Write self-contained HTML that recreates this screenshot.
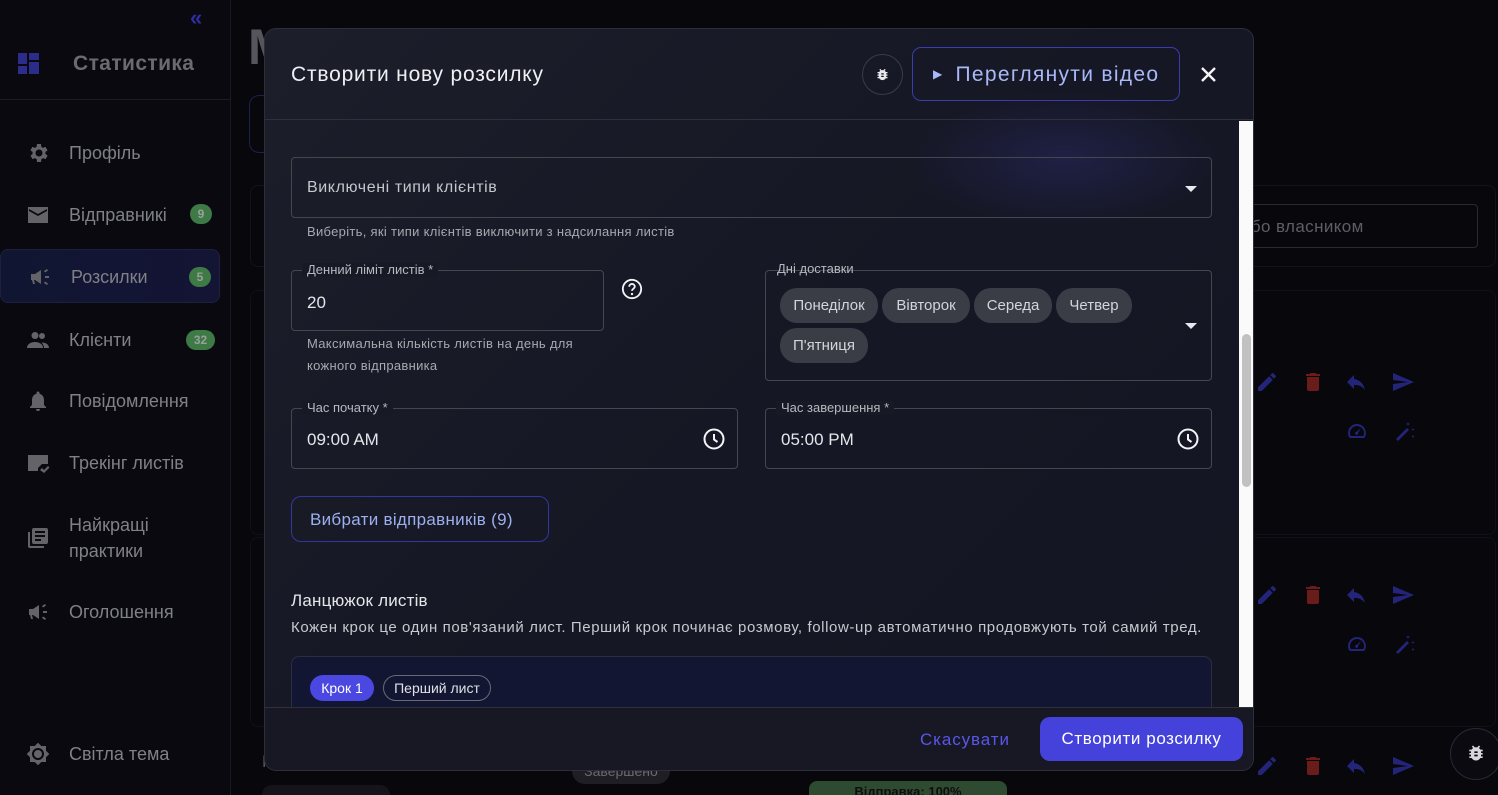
<!DOCTYPE html>
<html><head><meta charset="utf-8"><style>
*{box-sizing:border-box;margin:0;padding:0}
html,body{width:1498px;height:795px;overflow:hidden}
body{background:#07070c;font-family:"Liberation Sans",sans-serif;position:relative;color:#e8e8ee}
.sb{position:absolute;left:0;top:0;width:231px;height:795px;background:#09090f;border-right:1px solid #1a1a24}
.nav{position:absolute;left:26px;display:flex;align-items:center;color:#808088;font-size:18px}
.nav svg{width:24px;height:24px;fill:#646468;margin-right:19px}
.badge{position:absolute;height:20px;border-radius:10px;background:#3d7a45;color:#9aa19a;font-size:12px;font-weight:bold;display:flex;align-items:center;justify-content:center}
.modal{position:absolute;left:264px;top:28px;width:990px;height:743px;border-radius:12px;background:linear-gradient(135deg,#1c1e2a,#151724 50%,#141622);border:1px solid #2c2e3a;overflow:hidden}
.hdr{position:absolute;left:0;top:0;width:100%;height:91px;border-bottom:1px solid #2e303c}
.ttl{position:absolute;left:26px;top:34px;font-size:21px;color:#f0f0f4;letter-spacing:.8px}
.field{position:absolute;border:1px solid #45474f;border-radius:4px}
.lbl{position:absolute;top:-8px;left:10px;background:#171925;padding:0 5px;font-size:13px;color:#b8b8c0;line-height:14px}
.help{position:absolute;font-size:13px;color:#a8a8b0;letter-spacing:.3px;line-height:22px}
.val{position:absolute;left:15px;font-size:17px;color:#e6e6ea}
.chip{position:absolute;height:35px;border-radius:17px;background:#3a3c46;color:#d4d4da;font-size:15px;display:flex;align-items:center;justify-content:center}
.arrow{position:absolute;width:0;height:0;border-left:6px solid transparent;border-right:6px solid transparent;border-top:6px solid #e8e8ee}
</style></head><body>
<div class="sb">
 <div style="position:absolute;left:190px;top:5px;color:#2e2ea0;font-size:22px;font-weight:bold">«</div>
 <svg style="position:absolute;left:18px;top:53px" width="21" height="21" viewBox="0 0 21 21" fill="#2c2c8a"><rect x="0" y="0" width="9" height="11"/><rect x="11" y="0" width="10" height="7"/><rect x="0" y="13" width="9" height="8"/><rect x="11" y="9" width="10" height="12"/></svg>
 <div style="position:absolute;left:73px;top:52px;font-size:21px;font-weight:bold;color:#6a6a70;letter-spacing:.4px">Статистика</div>
 <div style="position:absolute;left:0;top:99px;width:231px;border-top:1px solid #1c1c26"></div>
 <div class="nav" style="top:141px"><svg viewBox="0 0 24 24"><path d="M19.4 13a7.5 7.5 0 000-2l2.1-1.6-2-3.5-2.5 1a7 7 0 00-1.7-1L15 3h-4l-.4 2.9a7 7 0 00-1.7 1l-2.5-1-2 3.5L6.6 11a7.5 7.5 0 000 2l-2.1 1.6 2 3.5 2.5-1a7 7 0 001.7 1L11 21h4l.4-2.9a7 7 0 001.7-1l2.5 1 2-3.5zM13 15.5a3.5 3.5 0 110-7 3.5 3.5 0 010 7z"/></svg>Профіль</div>
 <div class="nav" style="top:203px"><svg viewBox="0 0 24 24"><path d="M2 4h20v16H2zm10 7L3 6v2l9 5 9-5V6z"/></svg>Відправникі</div>
 <div class="badge" style="left:190px;top:204px;width:22px">9</div>
 <div style="position:absolute;left:0;top:249px;width:220px;height:54px;border-radius:8px;background:linear-gradient(90deg,#101632,#141434);border:1px solid #1e2040"></div>
 <div class="nav" style="top:265px;left:28px"><svg viewBox="0 0 24 24"><path d="M3 9h4l6-4v14l-6-4H6l1 4H5l-1-4H3zM17 11h4v2h-4zM16 6l3-2 1 1.5-3 2zM16 18l3 2 1-1.5-3-2z"/></svg>Розсилки</div>
 <div class="badge" style="left:189px;top:267px;width:22px">5</div>
 <div class="nav" style="top:328px"><svg viewBox="0 0 24 24"><path d="M9 11a3.5 3.5 0 110-7 3.5 3.5 0 010 7zm7 0a3 3 0 110-6 3 3 0 010 6zM1 20c0-4 4-6 8-6s8 2 8 6zm17 0c0-2-1-4-2.5-5.5 3.5 0 7.5 1.5 7.5 5.5z"/></svg>Клієнти</div>
 <div class="badge" style="left:186px;top:330px;width:29px">32</div>
 <div class="nav" style="top:389px"><svg viewBox="0 0 24 24"><path d="M12 22a2 2 0 002-2h-4a2 2 0 002 2zm6-6V11c0-3-1.6-5.5-4.5-6.2V4a1.5 1.5 0 00-3 0v.8C7.6 5.5 6 8 6 11v5l-2 2v1h16v-1z"/></svg>Повідомлення</div>
 <div class="nav" style="top:451px"><svg viewBox="0 0 24 24"><path d="M2 4h20v9h-6l-4 4v3H2zm10 7l9-5V6zM14 19l2-2 2 2 4-4 1.5 1.5L18 22z"/></svg>Трекінг листів</div>
 <div class="nav" style="top:512px;align-items:flex-start;line-height:26px"><svg style="margin-top:14px" viewBox="0 0 24 24"><path d="M4 6H2v14a2 2 0 002 2h14v-2H4zm16-4H8a2 2 0 00-2 2v12a2 2 0 002 2h12a2 2 0 002-2V4a2 2 0 00-2-2zm-1 9H9V9h10zm-4 4H9v-2h6zm4-8H9V5h10z"/></svg><span>Найкращі<br>практики</span></div>
 <div class="nav" style="top:600px"><svg viewBox="0 0 24 24"><path d="M3 9h4l6-4v14l-6-4H6l1 4H5l-1-4H3zM17 11h4v2h-4zM16 6l3-2 1 1.5-3 2zM16 18l3 2 1-1.5-3-2z"/></svg>Оголошення</div>
 <div class="nav" style="top:742px"><svg viewBox="0 0 24 24"><path d="M20 8.7V4h-4.7L12 .7 8.7 4H4v4.7L.7 12 4 15.3V20h4.7l3.3 3.3 3.3-3.3H20v-4.7l3.3-3.3zM12 18a6 6 0 110-12 6 6 0 010 12zm0-10a4 4 0 100 8 4 4 0 000-8z"/></svg>Світла тема</div>
</div>
<div style="position:absolute;left:248px;top:18px;font-size:50px;font-weight:bold;color:#55555c">М</div>
<div style="position:absolute;left:249px;top:95px;width:30px;height:58px;border:1px solid #1e2050;border-radius:10px"></div>
<div style="position:absolute;left:250px;top:185px;width:1246px;height:82px;border:1px solid #13131b;border-radius:8px"></div>
<div style="position:absolute;left:1230px;top:204px;width:248px;height:44px;border:1px solid #2a2a32;border-radius:4px;color:#5e5e64;font-size:17px;padding:12px 0 0 10px;letter-spacing:.4px">або власником</div>
<div style="position:absolute;left:250px;top:290px;width:1246px;height:245px;border:1px solid #101018;border-radius:8px"></div>
<div style="position:absolute;left:250px;top:537px;width:1246px;height:190px;border:1px solid #101018;border-radius:8px"></div>
<div style="position:absolute;left:262px;top:752px;font-size:17px;color:#55555c">Р</div>
<div style="position:absolute;left:572px;top:758px;width:98px;height:26px;border-radius:13px;background:#1e1e24;color:#6a6a70;font-size:14px;text-align:center;padding-top:5px">Завершено</div>
<div style="position:absolute;left:809px;top:781px;width:198px;height:22px;border-radius:8px;background:#2e4a30;color:#0e0e10;font-size:13px;font-weight:bold;text-align:center;padding-top:3px">Відправка: 100%</div>
<div style="position:absolute;left:262px;top:785px;width:128px;height:20px;border-radius:10px;background:#14141a"></div>
<svg width="0" height="0" style="position:absolute"><defs>
<g id="row"><path d="M3 17.3V21h3.7L17.8 9.9l-3.7-3.7zM20.7 7a1 1 0 000-1.4l-2.3-2.3a1 1 0 00-1.4 0l-1.8 1.8 3.7 3.7z" fill="#24247a"/><path transform="translate(46 0)" d="M6 19a2 2 0 002 2h8a2 2 0 002-2V7H6zM19 4h-3.5l-1-1h-5l-1 1H5v2h14z" fill="#6a1c1a"/><path transform="translate(89 0)" d="M10 9V5l-7 7 7 7v-4.1c5 0 8.5 1.6 11 5.1-1-5-4-10-11-11z" fill="#24247a"/><path transform="translate(136 0)" d="M2 21l21-9L2 3v7l15 2-15 2z" fill="#24247a"/></g>
<g id="row2"><path d="M12 5a9 9 0 00-9 9c0 2 .6 3.6 1.7 5h14.6A9 9 0 0012 5zm6.3 12H5.7A7 7 0 1118.3 17zM13 14l3-5-4.3 3.9A1.5 1.5 0 1013 14z" fill="#24247a"/><path transform="translate(47 0)" d="M4 20l11-11 2 2L6 22zM16 3l.6 1.4L18 5l-1.4.6L16 7l-.6-1.4L14 5l1.4-.6zM21 9l.5 1 1 .5-1 .5-.5 1-.5-1-1-.5 1-.5zM21 16l.5 1 1 .5-1 .5-.5 1-.5-1-1-.5 1-.5z" fill="#24247a"/></g>
</defs></svg>
<svg style="position:absolute;left:1255px;top:370px" width="170" height="24" viewBox="0 0 170 24"><use href="#row"/></svg>
<svg style="position:absolute;left:1345px;top:419px" width="80" height="24" viewBox="0 0 80 24"><use href="#row2"/></svg>
<svg style="position:absolute;left:1255px;top:583px" width="170" height="24" viewBox="0 0 170 24"><use href="#row"/></svg>
<svg style="position:absolute;left:1345px;top:632px" width="80" height="24" viewBox="0 0 80 24"><use href="#row2"/></svg>
<svg style="position:absolute;left:1255px;top:754px" width="170" height="24" viewBox="0 0 170 24"><use href="#row"/></svg>
<div style="position:absolute;left:1450px;top:728px;width:52px;height:52px;border-radius:26px;border:1px solid #2a2a34;background:#0a0a10"></div>
<svg style="position:absolute;left:1466px;top:743px" width="20" height="20" viewBox="0 0 24 24" fill="#d8d8dc"><path d="M20 8h-2.8a6 6 0 00-1.8-2l1.6-1.6L15.6 3l-2.2 2.2a6 6 0 00-2.8 0L8.4 3 7 4.4 8.6 6a6 6 0 00-1.8 2H4v2h2.1c-.1.3-.1.7-.1 1v1H4v2h2v1c0 .3 0 .7.1 1H4v2h2.8A6 6 0 0012 21a6 6 0 005.2-3H20v-2h-2.1c.1-.3.1-.7.1-1v-1h2v-2h-2v-1c0-.3 0-.7-.1-1H20zm-6 8h-4v-2h4zm0-4h-4v-2h4z"/></svg>

<div class="modal">
 <div style="position:absolute;left:640px;top:60px;width:320px;height:140px;background:radial-gradient(ellipse at center,rgba(50,50,130,.35),transparent 70%)"></div>
 <div class="hdr">
  <div class="ttl">Створити нову розсилку</div>
  <div style="position:absolute;left:597px;top:25px;width:41px;height:41px;border-radius:21px;border:1px solid #3a3c48"></div>
  <svg style="position:absolute;left:610px;top:38px" width="15" height="15" viewBox="0 0 24 24" fill="#e8e8ec"><path d="M20 8h-2.8a6 6 0 00-1.8-2l1.6-1.6L15.6 3l-2.2 2.2a6 6 0 00-2.8 0L8.4 3 7 4.4 8.6 6a6 6 0 00-1.8 2H4v2h2.1c-.1.3-.1.7-.1 1v1H4v2h2v1c0 .3 0 .7.1 1H4v2h2.8A6 6 0 0012 21a6 6 0 005.2-3H20v-2h-2.1c.1-.3.1-.7.1-1v-1h2v-2h-2v-1c0-.3 0-.7-.1-1H20zm-6 8h-4v-2h4zm0-4h-4v-2h4z"/></svg>
  <div style="position:absolute;left:647px;top:18px;width:268px;height:54px;border-radius:9px;border:1px solid #3a3cb0;color:#a8b8f8;font-size:21px;padding:15px 0 0 20px;letter-spacing:1.3px;white-space:nowrap"><span style="font-size:12px;vertical-align:3px;margin-right:12px">▶</span>Переглянути відео</div>
  <svg style="position:absolute;left:935px;top:37px" width="17" height="17" viewBox="0 0 17 17"><path d="M2 2L15 15M15 2L2 15" stroke="#f4f4f6" stroke-width="2.4"/></svg>
 </div>
 <div style="position:absolute;left:974px;top:92px;width:16px;height:587px;background:#fafafa"></div>
 <div style="position:absolute;left:977px;top:305px;width:9px;height:153px;border-radius:5px;background:#c1c1c1"></div>
 <div class="field" style="left:26px;top:128px;width:921px;height:61px"><div class="val" style="top:21px;color:#c6c6cc;font-size:16px;letter-spacing:.6px">Виключені типи клієнтів</div><div class="arrow" style="right:14px;top:28px"></div></div>
 <div class="help" style="left:42px;top:192px">Виберіть, які типи клієнтів виключити з надсилання листів</div>
 <div class="field" style="left:26px;top:241px;width:313px;height:61px"><div class="lbl">Денний ліміт листів *</div><div class="val" style="top:22px">20</div></div>
 <svg style="position:absolute;left:356px;top:249px" width="22" height="22" viewBox="0 0 24 24"><circle cx="12" cy="12" r="10" fill="none" stroke="#f4f4f6" stroke-width="2"/><path d="M9 9.5a3 3 0 116 0c0 2-3 2.3-3 4.5" fill="none" stroke="#f4f4f6" stroke-width="2"/><circle cx="12" cy="17.5" r="1.3" fill="#f4f4f6"/></svg>
 <div class="help" style="left:42px;top:304px">Максимальна кількість листів на день для<br>кожного відправника</div>
 <div class="field" style="left:500px;top:241px;width:447px;height:111px"><div class="lbl" style="left:6px;top:-9px;background:none">Дні доставки</div>
  <div class="chip" style="left:14px;top:17px;width:98px">Понеділок</div>
  <div class="chip" style="left:116px;top:17px;width:88px">Вівторок</div>
  <div class="chip" style="left:208px;top:17px;width:78px">Середа</div>
  <div class="chip" style="left:290px;top:17px;width:76px">Четвер</div>
  <div class="chip" style="left:14px;top:57px;width:88px">П'ятниця</div>
  <div class="arrow" style="right:14px;top:52px"></div></div>
 <div class="field" style="left:26px;top:379px;width:447px;height:61px"><div class="lbl">Час початку *</div><div class="val" style="top:21px">09:00 AM</div>
  <svg style="position:absolute;right:11px;top:18px" width="24" height="24" viewBox="0 0 24 24"><circle cx="12" cy="12" r="9.5" fill="none" stroke="#f4f4f6" stroke-width="2"/><path d="M12 7v5.5l3.5 2.5" fill="none" stroke="#f4f4f6" stroke-width="2"/></svg></div>
 <div class="field" style="left:500px;top:379px;width:447px;height:61px"><div class="lbl">Час завершення *</div><div class="val" style="top:21px">05:00 PM</div>
  <svg style="position:absolute;right:11px;top:18px" width="24" height="24" viewBox="0 0 24 24"><circle cx="12" cy="12" r="9.5" fill="none" stroke="#f4f4f6" stroke-width="2"/><path d="M12 7v5.5l3.5 2.5" fill="none" stroke="#f4f4f6" stroke-width="2"/></svg></div>
 <div style="position:absolute;left:26px;top:467px;width:258px;height:46px;border:1px solid #3436a0;border-radius:10px;color:#9cb0ee;font-size:17px;padding:13px 0 0 18px;letter-spacing:.3px;white-space:nowrap">Вибрати відправників (9)</div>
 <div style="position:absolute;left:26px;top:562px;font-size:17px;color:#e6e6ea;letter-spacing:.2px">Ланцюжок листів</div>
 <div style="position:absolute;left:26px;top:590px;font-size:15px;color:#c8c8ce;letter-spacing:.6px;white-space:nowrap">Кожен крок це один пов'язаний лист. Перший крок починає розмову, follow-up автоматично продовжують той самий тред.</div>
 <div style="position:absolute;left:26px;top:627px;width:921px;height:80px;border:1px solid #2c2e40;border-radius:8px;background:#131633"></div>
 <div style="position:absolute;left:45px;top:646px;width:64px;height:26px;border-radius:13px;background:#4a48e0;color:#fff;font-size:14px;text-align:center;padding-top:5px">Крок 1</div>
 <div style="position:absolute;left:118px;top:646px;width:108px;height:26px;border-radius:13px;border:1px solid #6a6a72;color:#e0e0e4;font-size:14px;text-align:center;padding-top:4px">Перший лист</div>
 <div style="position:absolute;left:0;top:678px;width:100%;height:65px;background:#171824;border-top:1px solid #2e303c"></div>
 <div style="position:absolute;left:655px;top:701px;font-size:17px;color:#5a56e8;letter-spacing:.9px">Скасувати</div>
 <div style="position:absolute;left:775px;top:688px;width:203px;height:44px;border-radius:10px;background:#4542dc;color:#fff;font-size:17px;text-align:center;padding-top:12px;letter-spacing:.6px;white-space:nowrap">Створити розсилку</div>
</div>
</body></html>
